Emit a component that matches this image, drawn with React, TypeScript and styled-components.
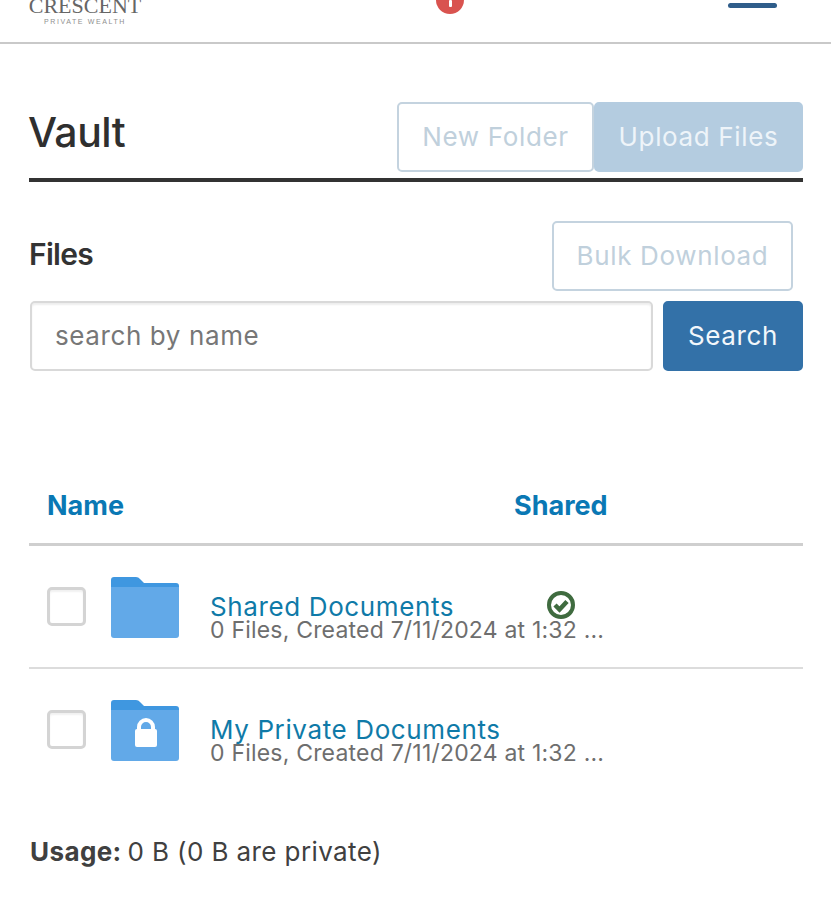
import styled, { createGlobalStyle } from "styled-components";

const GlobalStyle = createGlobalStyle`
  html, body {
    margin: 0;
    padding: 0;
    background: #fff;
    font-family: Inter, "Liberation Sans", sans-serif;
    color: #333;
  }
  * { box-sizing: border-box; }
`;

const Page = styled.div`
  width: 831px;
  height: 921px;
  overflow: hidden;
`;

const Header = styled.header`
  height: 44px;
  border-bottom: 2px solid #c9c9c9;
  padding: 0 54px 0 30px;
  display: grid;
  grid-template-columns: 110px 1fr 49px;
  overflow: hidden;
`;

const Logo = styled.div`
  width: 110px;
  margin-top: -6px;
  display: flex;
  flex-direction: column;
  align-items: center;
`;

const LogoName = styled.span`
  font-family: "Liberation Serif", serif;
  font-size: 22px;
  line-height: 23px;
  color: #666;
`;

const LogoSub = styled.span`
  font-family: "Liberation Sans", sans-serif;
  font-size: 7px;
  line-height: 9px;
  letter-spacing: 1.6px;
  white-space: nowrap;
  color: #8f8f8f;
`;

const Alert = styled.div`
  justify-self: center;
  margin: -14px 0 0 32px;
  width: 28px;
  height: 28px;
  border-radius: 50%;
  background: #d9534f;
  display: flex;
  justify-content: center;
  align-items: flex-end;
  padding-bottom: 7px;
`;

const AlertMark = styled.span`
  width: 3px;
  height: 7px;
  border-radius: 1px;
  background: #fff;
`;

const MenuBar = styled.div`
  justify-self: end;
  margin-top: 3px;
  width: 49px;
  height: 5px;
  border-radius: 3px;
  background: #2f5d8a;
`;

const Main = styled.main`
  padding: 58px 28px 0 29px;
`;

const TitleRow = styled.div`
  height: 80px;
  border-bottom: 4px solid #333;
  display: flex;
  justify-content: space-between;
  align-items: flex-start;
`;

const Title = styled.h1`
  margin: 5px 0 0 -1px;
  font-size: 41px;
  line-height: 50px;
  font-weight: 500;
  letter-spacing: -0.5px;
  color: #2f2f2f;
`;

const Buttons = styled.div`
  display: flex;
`;

const Button = styled.button<{ $variant: "outline" | "faded" | "solid"; $width: number }>`
  width: ${(p) => p.$width}px;
  height: 70px;
  padding: 0 0 1px;
  border-radius: 5px;
  font-family: inherit;
  font-size: 26px;
  letter-spacing: 0.65px;
  border: 2px solid
    ${(p) => (p.$variant === "outline" ? "#c4d3df" : p.$variant === "faded" ? "#b4cce0" : "#3371a8")};
  background: ${(p) => (p.$variant === "outline" ? "#fff" : p.$variant === "faded" ? "#b4cce0" : "#3371a8")};
  color: ${(p) => (p.$variant === "outline" ? "#c0d0dc" : p.$variant === "faded" ? "#eef4f9" : "#f2f7fb")};
`;

const FilesRow = styled.div`
  margin-top: 39px;
  padding-right: 10px;
  display: flex;
  justify-content: space-between;
  align-items: center;
`;

const FilesTitle = styled.h2`
  margin: 0;
  padding-bottom: 4px;
  font-size: 30px;
  font-weight: 600;
  letter-spacing: -0.7px;
  color: #333;
`;

const SearchRow = styled.div`
  margin-top: 10px;
  padding-left: 1px;
  display: flex;
  gap: 10px;
`;

const SearchInput = styled.input`
  flex: 1;
  min-width: 0;
  height: 70px;
  padding: 0 23px 1px;
  border: 2px solid #d9d9d9;
  border-radius: 5px;
  box-shadow: inset 0 2px 2px rgba(0, 0, 0, 0.07);
  font-family: inherit;
  font-size: 26px;
  letter-spacing: 0.6px;
  color: #333;
  &::placeholder {
    color: #777;
    opacity: 1;
  }
`;

const TableHead = styled.div`
  margin-top: 112px;
  height: 63px;
  padding: 0 18px;
  border-bottom: 3px solid #cfcfcf;
  display: grid;
  grid-template-columns: 467px 1fr;
`;

const HeadCell = styled.span`
  font-size: 27px;
  line-height: 46px;
  font-weight: 700;
  color: #0a78b4;
`;

const Row = styled.div`
  height: 123px;
  padding: 31px 18px 0;
  border-bottom: 2px solid #dcdcdc;
  display: flex;
  align-items: flex-start;
  &:last-of-type {
    border-bottom: 0;
  }
`;

const Check = styled.span`
  flex: none;
  width: 39px;
  height: 39px;
  margin-top: 10px;
  border: 3px solid #d4d4d4;
  border-radius: 5px;
  box-shadow: inset 0 2px 2px rgba(0, 0, 0, 0.06);
  background: #fff;
`;

const Folder = styled.svg`
  flex: none;
  width: 68px;
  height: 61px;
  margin-left: 25px;
`;

const Info = styled.div`
  position: relative;
  margin: 18px 0 0 31px;
  width: 395px;
`;

const FileName = styled.div`
  font-size: 26px;
  line-height: 24px;
  letter-spacing: 0.62px;
  white-space: nowrap;
  color: #0f7aa8;
`;

const FileMeta = styled.div`
  font-size: 23px;
  line-height: 23px;
  letter-spacing: 0.2px;
  white-space: nowrap;
  color: #6e6e6e;
`;

const Shared = styled.svg`
  position: absolute;
  left: 337px;
  top: -4px;
  width: 28px;
  height: 28px;
`;

const Usage = styled.p`
  margin: 0;
  padding: 44px 0 0 1px;
  font-size: 26px;
  line-height: 32px;
  letter-spacing: 0.4px;
  color: #404040;
  b {
    font-weight: 700;
    margin-right: -2px;
  }
`;

const FolderIcon = ({ locked }: { locked?: boolean }) => (
  <Folder viewBox="0 0 68 61">
    <path d="M0 3a3 3 0 0 1 3-3h22a5 5 0 0 1 4 2l4 4h32a3 3 0 0 1 3 3v6H0z" fill="#3f97e0" />
    <path d="M0 10h68v48a3 3 0 0 1-3 3H3a3 3 0 0 1-3-3z" fill="#62a9e8" />
    {locked && (
      <>
        <path d="M28 30v-3a7 7 0 0 1 14 0v3" fill="none" stroke="#fff" strokeWidth="4" />
        <rect x="24" y="29" width="22" height="18" rx="2" fill="#fff" />
      </>
    )}
  </Folder>
);

const rows = [
  { name: "Shared Documents", shared: true },
  { name: "My Private Documents", locked: true },
];

const App = () => {
  return (
    <Page>
      <GlobalStyle />
      <Header>
        <Logo>
          <LogoName>CRESCENT</LogoName>
          <LogoSub>PRIVATE WEALTH</LogoSub>
        </Logo>
        <Alert>
          <AlertMark />
        </Alert>
        <MenuBar />
      </Header>
      <Main>
        <TitleRow>
          <Title>Vault</Title>
          <Buttons>
            <Button $variant="outline" $width={197}>New Folder</Button>
            <Button $variant="faded" $width={209}>Upload Files</Button>
          </Buttons>
        </TitleRow>
        <FilesRow>
          <FilesTitle>Files</FilesTitle>
          <Button $variant="outline" $width={241}>Bulk Download</Button>
        </FilesRow>
        <SearchRow>
          <SearchInput placeholder="search by name" />
          <Button $variant="solid" $width={140}>Search</Button>
        </SearchRow>
        <TableHead>
          <HeadCell>Name</HeadCell>
          <HeadCell>Shared</HeadCell>
        </TableHead>
        {rows.map((row) => (
          <Row key={row.name}>
            <Check />
            <FolderIcon locked={row.locked} />
            <Info>
              <FileName>{row.name}</FileName>
              <FileMeta>0 Files, Created 7/11/2024 at 1:32 ...</FileMeta>
              {row.shared && (
                <Shared viewBox="0 0 28 28">
                  <circle cx="14" cy="14" r="12" fill="none" stroke="#3f6b3f" strokeWidth="4" />
                  <path d="M8 14l4.500 4.500 7.500-8" fill="none" stroke="#3f6b3f" strokeWidth="4.500" />
                </Shared>
              )}
            </Info>
          </Row>
        ))}
        <Usage>
          <b>Usage:</b> 0 B (0 B are private)
        </Usage>
      </Main>
    </Page>
  );
};

export default App;
